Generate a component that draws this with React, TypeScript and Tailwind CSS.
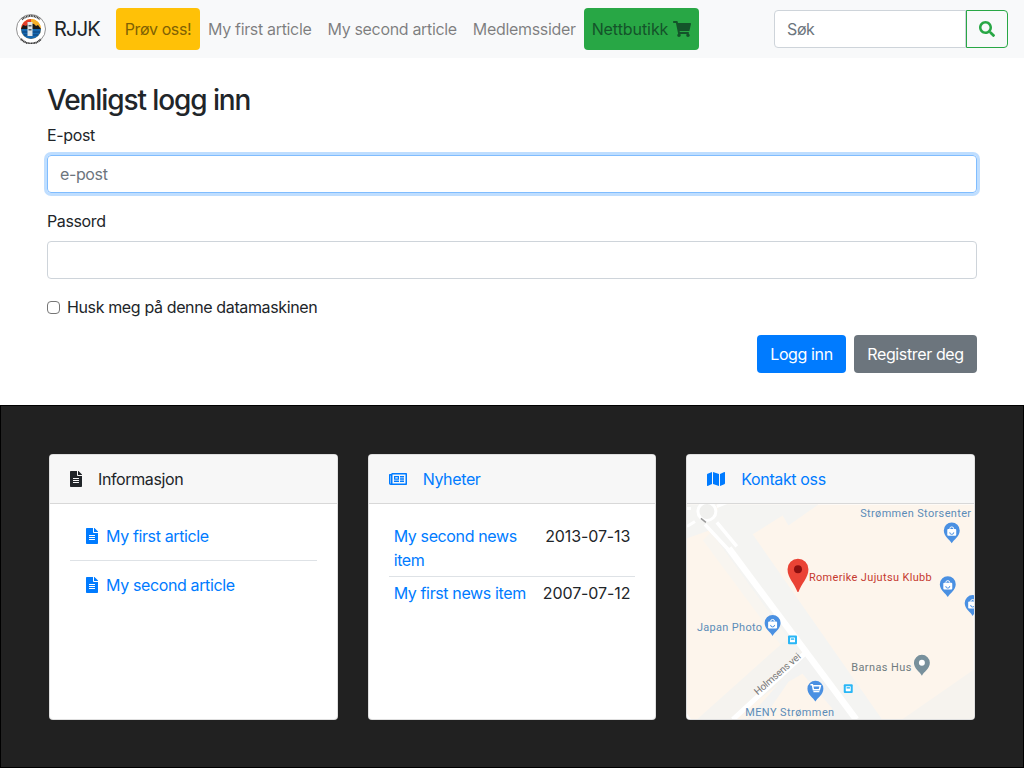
import { FaFileAlt, FaMap, FaRegNewspaper, FaSearch, FaShoppingCart } from 'react-icons/fa'

function Logo() {
  return (
    <svg width="30" height="30" viewBox="0 0 30 30" className="shrink-0">
      <circle cx="15" cy="15" r="14.5" fill="#fff" stroke="#777" strokeWidth="0.8" />
      <circle cx="15" cy="15" r="10" fill="#f6a21c" />
      <path d="M5 15a10 10 0 0 1 10-10v10z" fill="#e53d2a" />
      <path d="M15 5a10 10 0 0 1 10 10H15z" fill="#f7b02a" />
      <path d="M5 15l2-4 3 1 3-3 5 1 2 2 2-1 3 4z" fill="#1a1a1a" />
      <path d="M5 15h20a10 10 0 0 1-20 0z" fill="#1668b0" />
      <path d="M6 18h18M8 21h14" stroke="#0d3f73" strokeWidth="1" />
      <rect x="11.500" y="8" width="5" height="14" fill="#dfe6ea" />
      <rect x="12.500" y="11" width="3" height="1.500" fill="#4d5a63" />
      <rect x="12.500" y="15" width="3" height="1.500" fill="#4d5a63" />
      <path d="M6 5.500a13.200 13.200 0 0 1 18 0" fill="none" stroke="#333" strokeWidth="2" strokeDasharray="1 .6" />
      <path d="M5 25a13.200 13.200 0 0 0 20 0" fill="none" stroke="#333" strokeWidth="2" strokeDasharray="1 .6" />
    </svg>
  )
}

function Pin({ x, y, color, kind }: { x: number; y: number; color: string; kind: 'bag' | 'cart' | 'dot' }) {
  return (
    <g transform={`translate(${x} ${y})`}>
      <path d="M0 11C-2 7-8 4-8 -2a8 8 0 0 1 16 0C8 4 2 7 0 11z" fill={color} />
      {kind === 'bag' && (
        <>
          <rect x="-4.500" y="-3.500" width="9" height="7" rx="1" fill="#fff" />
          <path d="M-2-3.500a2 2 0 0 1 4 0" fill="none" stroke="#fff" strokeWidth="1" />
          <path d="M-2 0a2 2 0 0 0 4 0" fill="none" stroke={color} strokeWidth="1" />
        </>
      )}
      {kind === 'cart' && <path d="M-5-6h2l1 5h6l1-4h-7M-2 1h6" fill="none" stroke="#fff" strokeWidth="1.500" />}
      {kind === 'dot' && <circle cx="0" cy="-2" r="3" fill="#fff" />}
    </g>
  )
}

function Bus({ x, y }: { x: number; y: number }) {
  return (
    <g transform={`translate(${x} ${y})`}>
      <rect width="9" height="9" rx="1" fill="#29b6f6" />
      <rect x="2" y="2" width="5" height="5" rx=".6" fill="#fff" />
      <rect x="2.800" y="3" width="3.400" height="1.400" fill="#29b6f6" />
    </g>
  )
}

function MapPicture() {
  return (
    <svg viewBox="0 0 288 216" className="block h-[216px] w-full" style={{ fontFamily: 'Roboto, sans-serif' }}>
      <rect width="288" height="216" fill="#fdf5ec" />
      {/* grey band right of the main road */}
      <path d="M32 0H132L102 21 96 11 66 30 196 216H160L24 28z" fill="#f4f4f2" />
      <path d="M0 0H30L28 24 0 34z" fill="#f4f4f2" />
      <path d="M24 28 160 216H150L16 36z" fill="#f8f5f0" />
      {/* side road blocks */}
      <path d="M86 148 102 134 124 156 46 216H10z" fill="#f5f3ef" />
      <path d="M119 150 165 216H60z" fill="#f3f3f2" />
      <path d="M102 178 116 170 146 205 139 216H76z" fill="#fdf5ec" />
      <path d="M288 166V216H216z" fill="#f6f3ee" />
      {/* roads */}
      <path d="M42 44 170 216" stroke="#fff" strokeWidth="6.500" fill="none" />
      <path d="M18 20 44 48M30 18 50 42" stroke="#fff" strokeWidth="3.500" fill="none" />
      <circle cx="20" cy="7" r="9" fill="#f0f0ee" stroke="#fff" strokeWidth="3" />
      <path d="M8 17 0 22M30 2 40 -2M4 4H0" stroke="#fff" strokeWidth="3" />
      <path d="M119 149 46 216" stroke="#fff" strokeWidth="5" fill="none" />
      <path d="M14 14 19 18" stroke="#999" strokeWidth="1.500" />
      <path d="M0 210 4 216H0z" fill="#fff" />

      <text x="174" y="13" fontSize="11" fill="#5b8cb8" textLength="111">Strømmen Storsenter</text>
      <Pin x={266} y={28} color="#4a90e2" kind="bag" />
      <path d="M111 88C108 79 101 74 101 65a10.500 10.500 0 0 1 21 0C122 74 115 79 112 88z" fill="#ea4335" />
      <circle cx="111.500" cy="65" r="4" fill="#8b0f0f" />
      <text x="122.500" y="77" fontSize="11" fill="#c5392f" textLength="123">Romerike Jujutsu Klubb</text>
      <Pin x={262} y={82} color="#4a90e2" kind="bag" />
      <Pin x={287} y={101} color="#4a90e2" kind="bag" />
      <text x="10" y="127" fontSize="11" fill="#5b8cb8" textLength="65">Japan Photo</text>
      <Pin x={86} y={121} color="#4a90e2" kind="bag" />
      <Bus x={101.500} y={131.500} />
      <text x="165" y="167" fontSize="11" fill="#6f7b80" textLength="60">Barnas Hus</text>
      <Pin x={236} y={161} color="#78909c" kind="dot" />
      <text x="71" y="192" fontSize="10" fill="#777" transform="rotate(-41 71 192)" textLength="58">Holmsens vei</text>
      <Pin x={129} y={187} color="#4a90e2" kind="cart" />
      <Bus x={157.500} y={180.500} />
      <text x="58.500" y="212.500" fontSize="11" fill="#5b8cb8" textLength="89">MENY Strømmen</text>
    </svg>
  )
}

const linkClass = 'text-[#007bff]'

export default function App() {
  return (
    <div className="font-['Inter','Liberation_Sans',sans-serif] text-base leading-6 tracking-[-0.37px] text-[#212529]">
      <nav className="flex h-[58px] items-center bg-[#f8f9fa] px-4">
        <Logo />
        <span className="ml-2 mr-4 w-[46px] text-xl tracking-[-0.8px]">RJJK</span>
        <div className="flex h-[42px] w-[84px] items-center justify-center rounded bg-[#ffc107] text-[#7f6104]">Prøv oss!</div>
        <a className="px-2 tracking-[-0.33px] text-[#00000080]">My first article</a>
        <a className="px-2 tracking-[-0.33px] text-[#00000080]">My second article</a>
        <a className="px-2 tracking-[-0.33px] text-[#00000080]">Medlemssider</a>
        <div className="flex h-[42px] items-center gap-[5px] rounded bg-[#28a745] px-2 tracking-[-0.07px] text-[#14532a]">
          Nettbutikk <FaShoppingCart className="text-lg" />
        </div>
        <div className="ml-auto flex h-[38px]">
          <div className="flex w-[192px] items-center rounded-l border border-[#ced4da] bg-white px-3 text-[#6c757d]">Søk</div>
          <div className="flex w-[42px] items-center justify-center rounded-r border border-[#28a745] text-[#28a745]">
            <FaSearch />
          </div>
        </div>
      </nav>

      <main className="h-[347px] bg-white px-[47px] pt-[25px]">
        <h3 className="mb-2 h-[32px] text-[28px] font-medium leading-[34px] tracking-[-1.1px]">Venligst logg inn</h3>
        <label className="mb-2 block">E-post</label>
        <div className="mb-4 flex h-[38px] items-center rounded border border-[#80bdff] px-3 text-[#6c757d] shadow-[0_0_0_3px_rgba(0,123,255,0.25)]">
          e-post
        </div>
        <label className="mb-2 block">Passord</label>
        <div className="mb-4 h-[38px] rounded border border-[#ced4da]" />
        <div className="mb-4 flex h-6 items-center">
          <span className="mr-[7px] h-[13px] w-[13px] rounded-sm border border-[#767676] bg-white" />
          Husk meg på denne datamaskinen
        </div>
        <div className="flex justify-end gap-2">
          <button className="h-[38px] w-[89px] rounded bg-[#007bff] text-white">Logg inn</button>
          <button className="h-[38px] w-[123px] rounded bg-[#6c757d] text-white">Registrer deg</button>
        </div>
      </main>

      <footer className="h-[363px] border border-black bg-[#212121] px-12 pt-12">
        <div className="grid grid-cols-3 gap-[30px]">
          <section className="h-[266px] overflow-hidden rounded border border-[#00000020] bg-white">
            <header className="flex h-[49px] items-center border-b border-[#00000020] bg-[#f7f7f7] pl-5">
              <FaFileAlt className="mr-4 h-4 w-3" />
              Informasjon
            </header>
            <ul className="mx-5 mt-[8px]">
              <li className="flex h-[49px] items-center border-b border-[#dee2e6] pl-4 text-[#007bff]">
                <FaFileAlt className="mr-2 h-4 w-3" />
                My first article
              </li>
              <li className="flex h-[48px] items-center pl-4 text-[#007bff]">
                <FaFileAlt className="mr-2 h-4 w-3" />
                My second article
              </li>
            </ul>
          </section>

          <section className="h-[266px] overflow-hidden rounded border border-[#00000020] bg-white">
            <header className={`flex h-[49px] items-center border-b border-[#00000020] bg-[#f7f7f7] pl-5 ${linkClass}`}>
              <FaRegNewspaper className="mr-4 text-lg" />
              Nyheter
            </header>
            <div className="mx-5 mt-5">
              <div className="flex border-b border-[#dee2e6] pb-1 pl-[5px] pr-[5px]">
                <span className={`w-[140px] ${linkClass}`}>My second news item</span>
                <span className="ml-auto tracking-[-0.1px]">2013-07-13</span>
              </div>
              <div className="flex pl-[5px] pr-[5px] pt-1">
                <span className={linkClass}>My first news item</span>
                <span className="ml-auto tracking-[-0.1px]">2007-07-12</span>
              </div>
            </div>
          </section>

          <section className="h-[266px] overflow-hidden rounded border border-[#00000020] bg-white">
            <header className={`flex h-[49px] items-center border-b border-[#00000020] bg-[#f7f7f7] pl-5 ${linkClass}`}>
              <FaMap className="mr-4 text-lg" />
              Kontakt oss
            </header>
            <MapPicture />
          </section>
        </div>
      </footer>
    </div>
  )
}
